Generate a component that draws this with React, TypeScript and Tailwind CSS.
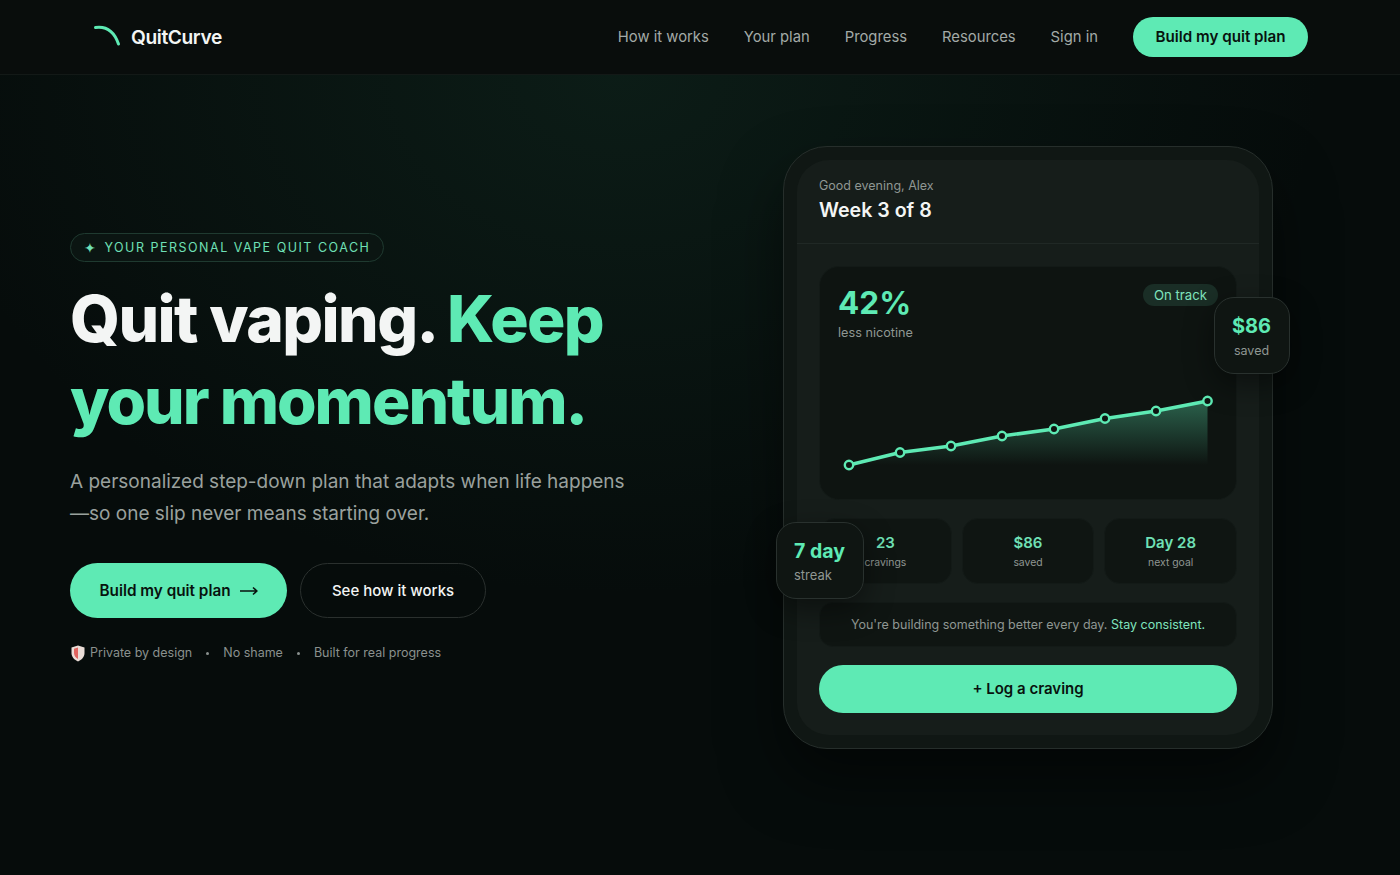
const navLinks = ["How it works", "Your plan", "Progress", "Resources", "Sign in"];

const stats = [
  { value: "23", label: "cravings" },
  { value: "$86", label: "saved" },
  { value: "Day 28", label: "next goal" },
];

const points = [
  [849, 465],
  [900, 452.5],
  [951, 446],
  [1002, 436],
  [1054, 429],
  [1105, 418.5],
  [1156, 411],
  [1207.5, 401],
];

function Chart() {
  // coordinates are page px, shifted into the svg box
  const pts = points.map(([x, y]) => [x - 820, y - 380]);
  const line = pts.map(([x, y]) => `${x},${y}`).join(" ");
  const area = `M${pts.map(([x, y]) => `${x},${y}`).join(" L")} L387.5,85 L29,85 Z`;
  return (
    <svg width="416" height="110" viewBox="0 0 416 110" className="block">
      <defs>
        <linearGradient id="fade" x1="0" y1="0" x2="0" y2="1" gradientUnits="objectBoundingBox">
          <stop offset="0" stopColor="#5eeab4" stopOpacity="0.36" />
          <stop offset="1" stopColor="#5eeab4" stopOpacity="0" />
        </linearGradient>
      </defs>
      <path d={area} fill="url(#fade)" />
      <polyline points={line} fill="none" stroke="#5eeab4" strokeWidth="3.5" strokeLinejoin="round" />
      {pts.map(([x, y]) => (
        <circle key={x} cx={x} cy={y} r="4.2" fill="#0e1411" stroke="#5eeab4" strokeWidth="2.4" />
      ))}
    </svg>
  );
}

function Phone() {
  return (
    <div className="relative w-[490px] h-[603px] rounded-[44px] border border-[#262e2b] bg-[#101714] p-[13px] shadow-[0_30px_60px_rgba(0,0,0,0.5)]">
      <div className="flex h-full flex-col rounded-[32px] bg-[#161d1a]">
        {/* Greeting */}
        <div className="h-[84px] border-b border-[#202825] px-[22px] pt-[17px]">
          <p className="text-[12.5px] leading-[17px] text-[#8f9793]">Good evening, Alex</p>
          <p className="mt-[2px] text-[19.6px] leading-[28px] font-semibold text-[#f3f5f4]">Week 3 of 8</p>
        </div>

        <div className="flex flex-1 flex-col px-[22px] pt-[22px]">
          {/* Chart card */}
          <div className="h-[234px] rounded-[20px] border border-[#131a17] bg-[#0e1411]">
            <div className="flex items-start justify-between pl-[18px] pr-[18px] pt-[17px]">
              <div>
                <p className="text-[31.5px] leading-[38px] font-bold text-[#5eeab4]">42%</p>
                <p className="mt-[2px] text-[12.7px] leading-[18px] text-[#8f9793]">less nicotine</p>
              </div>
              <span className="rounded-full bg-[#1a2e26] px-[11px] py-[1px] text-[13.2px] leading-[20px] text-[#7fe3bd]">
                On track
              </span>
            </div>
            <div className="mt-[38px]">
              <Chart />
            </div>
          </div>

          {/* Stats */}
          <div className="mt-[18px] grid grid-cols-3 gap-[10px]">
            {stats.map((s) => (
              <div
                key={s.label}
                className="flex h-[66px] flex-col items-center justify-center rounded-[16px] border border-[#131a17] bg-[#0f1512]"
              >
                <p className="text-[15px] leading-[22px] font-semibold text-[#6fe0b6]">{s.value}</p>
                <p className="mt-[1px] text-[10.4px] leading-[16px] text-[#8f9793]">{s.label}</p>
              </div>
            ))}
          </div>

          {/* Message */}
          <div className="mt-[18px] flex h-[45px] items-center justify-center rounded-[14px] border border-[#131a17] bg-[#0f1512] pt-[1px] text-[12.5px] text-[#8f9793]">
            <span>
              You're building something better every day. <span className="text-[#7fe3bd]">Stay consistent.</span>
            </span>
          </div>

          <button className="mt-[18px] h-[48px] rounded-full bg-[#5eeab4] text-[15px] font-semibold text-[#08120e]">
            + Log a craving
          </button>
        </div>
      </div>

      {/* Floating badges */}
      <div className="absolute left-[430px] top-[150px] flex h-[77px] w-[76px] flex-col items-center justify-center rounded-[20px] border border-[#29312e] bg-[#0f1512] pt-[1px] pr-[1px] shadow-[0_10px_30px_rgba(0,0,0,0.45)]">
        <p className="text-[20px] leading-[28px] font-bold text-[#5eeab4]">$86</p>
        <p className="mt-[2px] text-[12.5px] leading-[18px] text-[#8f9793]">saved</p>
      </div>
      <div className="absolute left-[-8px] top-[375px] flex h-[77px] w-[88px] flex-col justify-center rounded-[20px] border border-[#29312e] bg-[#0f1512] pl-[17px] shadow-[0_10px_30px_rgba(0,0,0,0.45)]">
        <p className="text-[19.5px] leading-[28px] font-bold text-[#5eeab4]">7 day</p>
        <p className="mt-[1px] text-[13px] leading-[18px] text-[#8f9793]">streak</p>
      </div>
    </div>
  );
}

export default function App() {
  return (
    <div className="h-[875px] overflow-hidden bg-[#060c0b] bg-[radial-gradient(ellipse_700px_520px_at_620px_75px,rgba(30,80,60,0.24),transparent)] font-['Inter',sans-serif]">
      {/* Header */}
      <header className="flex h-[75px] items-center justify-between border-b border-[#131917] bg-[#090d0c] pl-[92px] pr-[92px]">
        <div className="flex items-center gap-[9px]">
          <svg width="30" height="30" viewBox="0 0 30 30" fill="none">
            <path d="M3.500 5.500 C14 4 22 9 26.500 22" stroke="#5eeab4" strokeWidth="3" strokeLinecap="round" />
          </svg>
          <span className="text-[19.2px] font-semibold tracking-[-0.4px] text-[#f3f5f4]">QuitCurve</span>
        </div>
        <nav className="flex items-center gap-[35px] text-[14.8px] text-[#a3aaa7]">
          {navLinks.map((l) => (
            <a key={l} href="#" className="pt-[1px]">
              {l}
            </a>
          ))}
          <button className="h-[40px] w-[175px] rounded-full bg-[#5eeab4] text-[15.2px] font-semibold text-[#08120e]">
            Build my quit plan
          </button>
        </nav>
      </header>

      {/* Hero */}
      <main className="flex items-start justify-between pl-[70px] pr-[127px] pt-[71px]">
        <section className="pt-[87px]">
          <div className="inline-flex h-[29px] items-center gap-[7px] rounded-full border border-[#1f3a30] bg-[#0b1512] pl-[13px] pr-[13px] pt-[1px] text-[12.5px] tracking-[1.5px] text-[#6fe0b6]">
            <span className="text-[14px] leading-none">✦</span>
            YOUR PERSONAL VAPE QUIT COACH
          </div>
          <h1 className="mt-[16px] w-[620px] text-[64px] leading-[82px] font-extrabold tracking-[-1.6px] text-[#f3f5f4]">
            Quit vaping. <span className="text-[#5eeab4]">Keep</span>
            <br />
            <span className="tracking-[-2px] text-[#5eeab4]">your momentum.</span>
          </h1>
          <p className="mt-[24px] w-[570px] text-[19px] leading-[32px] text-[#9aa19e]">
            A personalized step-down plan that adapts when life happens
            <br />
            —so one slip never means starting over.
          </p>
          <div className="mt-[33px] flex gap-[13px]">
            <button className="flex h-[55px] w-[217px] items-center justify-center gap-[9px] rounded-full bg-[#5eeab4] pt-[1px] text-[15.3px] font-semibold text-[#08120e]">
              Build my quit plan
              <svg width="18" height="10" viewBox="0 0 18 10" fill="none" stroke="#08120e" strokeWidth="1.6">
                <path d="M0 5H16.500M13 1.500 16.800 5 13 8.500" />
              </svg>
            </button>
            <button className="h-[55px] w-[186px] rounded-full border border-[#2a302e] pt-[1px] text-[15px] font-medium text-[#f3f5f4]">
              See how it works
            </button>
          </div>
          <div className="mt-[26px] flex items-center text-[12.5px] text-[#8a918e]">
            <svg width="14" height="17" viewBox="0 0 14 17" className="mr-[5px] ml-[1px]">
              <path d="M7 .5 13.500 2.500V8C13.500 12 10.500 15 7 16.500 3.500 15 .5 12 .5 8V2.500Z" fill="#e9dcd6" />
              <path d="M7 2.500 3 3.800V8C3 11 5 13 7 14Z" fill="#e0645f" />
            </svg>
            <span>Private by design</span>
            <span className="mx-[14px] h-[3px] w-[3px] rounded-full bg-[#8a918e]" />
            <span>No shame</span>
            <span className="mx-[14px] h-[3px] w-[3px] rounded-full bg-[#8a918e]" />
            <span>Built for real progress</span>
          </div>
        </section>
        <Phone />
      </main>
    </div>
  );
}
